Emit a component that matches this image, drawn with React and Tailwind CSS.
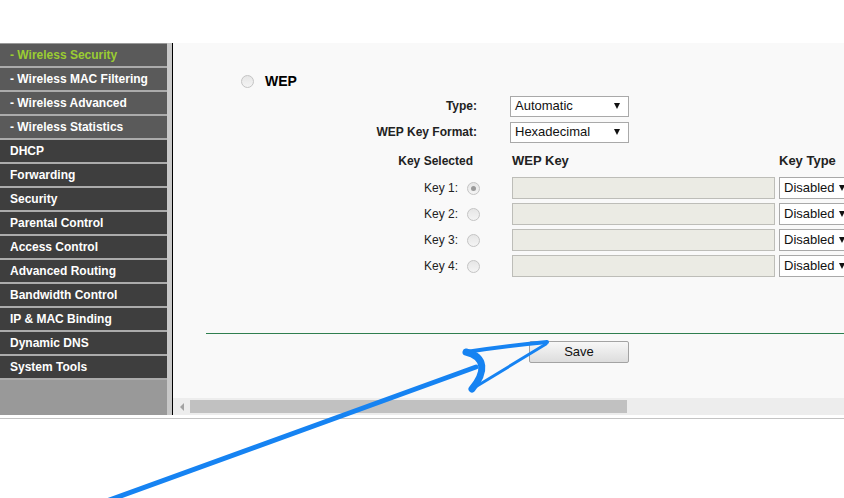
import React from "react";

const menu = [
  { label: "- Wireless Security", sub: true, active: true },
  { label: "- Wireless MAC Filtering", sub: true },
  { label: "- Wireless Advanced", sub: true },
  { label: "- Wireless Statistics", sub: true },
  { label: "DHCP" },
  { label: "Forwarding" },
  { label: "Security" },
  { label: "Parental Control" },
  { label: "Access Control" },
  { label: "Advanced Routing" },
  { label: "Bandwidth Control" },
  { label: "IP & MAC Binding" },
  { label: "Dynamic DNS" },
  { label: "System Tools" },
];

const Radio = ({ checked }) => (
  <div className="flex h-[13px] w-[13px] items-center justify-center rounded-full border border-[#c4c4c4] bg-gradient-to-b from-[#e6e6e6] to-[#f4f4f4]">
    {checked && <div className="h-[5px] w-[5px] rounded-full bg-[#9a9a9a]" />}
  </div>
);

const Select = ({ value, className }) => (
  <div
    className={
      "flex shrink-0 items-center border border-[#a9a9a9] bg-white pl-[4px] text-[13px] text-[#111] " +
      className
    }
  >
    <span>{value}</span>
    <div className="h-0 w-0 shrink-0 border-x-[3px] border-t-[6px] border-x-transparent border-t-[#111]" />
  </div>
);

export default function App() {
  const font = { fontFamily: '"Liberation Sans", Arial, sans-serif' };

  return (
    <div className="relative h-[498px] w-[844px] overflow-hidden bg-white" style={font}>
      <div className="h-[43px]" />

      <div className="flex h-[372px]">
        {/* sidebar */}
        <div className="flex w-[167px] shrink-0 flex-col bg-[#999999] pt-[1px]">
          {menu.map((m) => (
            <div
              key={m.label}
              className={
                "flex h-[24px] items-center border-b-2 border-[#ababab] pl-[10px] text-[12px] font-bold " +
                (m.sub ? "bg-[#5a5a5a] " : "bg-[#3e3e3e] ") +
                (m.active ? "text-[#9acd32]" : "text-white")
              }
            >
              {m.label}
            </div>
          ))}
        </div>
        <div className="w-[5px] shrink-0 bg-[#c8c8c8]" />
        <div className="w-[1px] shrink-0 bg-black" />

        {/* content */}
        <div className="flex min-w-0 flex-1 flex-col overflow-hidden bg-[#f9f9f9]">
          <div className="flex flex-1 flex-col text-[12px] text-[#222]">
            <div className="mt-[28px] flex h-[20px] items-center">
              <div className="ml-[68px]">
                <Radio />
              </div>
              <span className="ml-[11px] text-[14px] font-bold text-black">WEP</span>
            </div>

            <div className="mt-[4px] flex h-[22px] items-center">
              <div className="w-[304px] shrink-0 text-right font-bold">Type:</div>
              <Select value="Automatic" className="ml-[33px] h-[21px] w-[119px] justify-between pr-[8px]" />
            </div>

            <div className="mt-[4px] flex h-[22px] items-center">
              <div className="w-[304px] shrink-0 text-right font-bold">WEP Key Format:</div>
              <Select value="Hexadecimal" className="ml-[33px] h-[21px] w-[119px] justify-between pr-[8px]" />
            </div>

            <div className="mt-[7px] flex h-[22px] items-center font-bold">
              <div className="w-[300px] shrink-0 text-right">Key Selected</div>
              <div className="ml-[39px] w-[267px] shrink-0 text-[13px]">WEP Key</div>
              <div className="shrink-0 text-[13px]">Key Type</div>
            </div>

            <div className="mt-[5px] flex flex-col gap-[4px]">
              {[1, 2, 3, 4].map((n) => (
                <div key={n} className="flex h-[22px] items-center">
                  <div className="w-[285px] shrink-0 text-right">Key {n}:</div>
                  <div className="ml-[9px] shrink-0">
                    <Radio checked={n === 1} />
                  </div>
                  <div className="ml-[32px] h-[22px] w-[263px] shrink-0 border border-[#bdbdb8] bg-[#ebebe4]" />
                  <Select value="Disabled" className="ml-[4px] h-[22px] w-[70px] gap-[4px]" />
                </div>
              ))}
            </div>

            <div className="ml-[33px] mt-[56px] h-[1px] bg-[#2f7f4f]" />

            <div className="ml-[356px] mt-[7px] flex h-[22px] w-[100px] items-center justify-center rounded-[2px] border border-[#a3a3a3] bg-gradient-to-b from-[#f7f7f7] to-[#dddddd] text-[13px] text-[#111]">
              Save
            </div>
          </div>

          {/* horizontal scrollbar */}
          <div className="flex h-[17px] shrink-0 items-center bg-[#ededed]">
            <div className="flex w-[17px] shrink-0 items-center justify-center">
              <div className="h-0 w-0 border-y-[4px] border-r-[4px] border-y-transparent border-r-[#a3a3a3]" />
            </div>
            <div className="h-[13px] w-[437px] bg-[#c1c1c1]" />
          </div>
        </div>
      </div>

      <div className="mt-[3px] h-[1px] bg-[#c4c4c4]" />

      {/* hand-drawn annotation arrow */}
      <svg
        className="pointer-events-none absolute left-0 top-0"
        width="844"
        height="498"
        viewBox="0 0 844 498"
        fill="none"
      >
        <path d="M104 502 L476 367" stroke="#1683f2" strokeWidth="5" strokeLinecap="round" />
        <path d="M547 342 Q505 346 466 352" stroke="#1683f2" strokeWidth="4" strokeLinecap="round" />
        <path d="M466 352 C486 357 486 372 472 389" stroke="#1683f2" strokeWidth="7" strokeLinecap="round" />
        <path d="M472 389 L546 344" stroke="#1683f2" strokeWidth="3" strokeLinecap="round" />
      </svg>
    </div>
  );
}
